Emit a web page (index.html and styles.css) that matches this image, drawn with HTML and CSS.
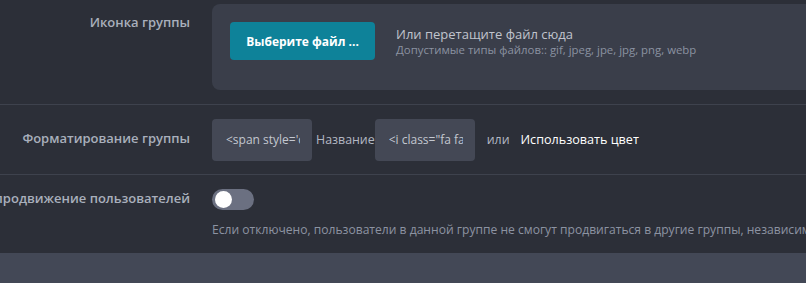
FILE: index.html
```html
<!DOCTYPE html>
<html>
<head>
    <title>Группа</title>
    <link rel="stylesheet" href="styles.css">
</head>
<body>
    <div class="settings">
        <div class="row row-icon">
            <div class="label">Иконка группы</div>
            <div class="field">
                <div class="dropzone">
                    <button type="button" class="pick-btn">Выберите файл ...</button>
                    <div class="drop-text">
                        <div class="drop-main">Или перетащите файл сюда</div>
                        <div class="drop-hint">Допустимые типы файлов:: gif, jpeg, jpe, jpg, png, webp</div>
                    </div>
                </div>
            </div>
        </div>

        <div class="row row-format">
            <div class="label">Форматирование группы</div>
            <div class="field inline">
                <input type="text" class="code-input" value="<span style='color: #fff'>">
                <span class="word">Название</span>
                <input type="text" class="code-input" value='<i class="fa fa-user"></i>'>
                <span class="word or">или</span>
                <span class="use-color">Использовать цвет</span>
            </div>
        </div>

        <div class="row row-promo">
            <div class="label">Разрешить продвижение пользователей</div>
            <div class="field">
                <label class="toggle"><span class="knob"></span></label>
                <div class="help">Если отключено, пользователи в данной группе не смогут продвигаться в другие группы, независимо от настроек.</div>
            </div>
        </div>
    </div>
    <div class="footer-bar"></div>
</body>
</html>
```

FILE: styles.css
```css
html, body {
    margin: 0;
    padding: 0;
    overflow: hidden;
}

body {
    font-family: "Open Sans", Arial, sans-serif;
    background-color: #2c2f38;
    color: #c2c6cf;
    width: 806px;
    height: 283px;
}

.row {
    display: flex;
    border-bottom: 1px solid #3e424d;
}

.label {
    width: 190px;
    flex-shrink: 0;
    display: flex;
    justify-content: flex-end;
    white-space: nowrap;
    font-size: 13px;
    font-weight: 600;
    color: #a9afbc;
    line-height: 18px;
}

.field {
    margin-left: 22px;
    flex: 1;
    min-width: 0;
}

/* icon row */
.row-icon {
    height: 104px;
}

.row-icon .label {
    padding-top: 13px;
}

.row-icon .field {
    padding-top: 4px;
}

.dropzone {
    display: flex;
    align-items: flex-start;
    background-color: #3a3e4a;
    border-radius: 8px 0 0 8px;
    height: 86px;
    box-sizing: border-box;
    padding: 18px;
}

.pick-btn {
    width: 145px;
    height: 38px;
    background-color: #0e8299;
    color: #fff;
    font-family: "Open Sans", Arial, sans-serif;
    font-size: 12px;
    font-weight: 700;
    border: none;
    border-radius: 4px;
    padding: 0;
    flex-shrink: 0;
}

.drop-text {
    margin-left: 21px;
    padding-top: 3px;
    white-space: nowrap;
}

.drop-main {
    font-size: 13px;
    line-height: 18px;
    color: #c0c4cd;
}

.drop-hint {
    font-size: 11.4px;
    line-height: 14px;
    color: #8b92a1;
}

/* format row */
.row-format {
    height: 69px;
    align-items: center;
}

.row-format .label {
    padding-bottom: 3px;
}

.inline {
    display: flex;
    align-items: center;
    white-space: nowrap;
}

.code-input {
    width: 100px;
    height: 42px;
    flex-shrink: 0;
    box-sizing: border-box;
    background-color: #444855;
    border: none;
    border-radius: 4px;
    padding: 0 12px 0 14px;
    font-family: "Open Sans", Arial, sans-serif;
    font-size: 12px;
    color: #c3c7d0;
    outline: none;
}

.word {
    font-size: 12.4px;
    color: #b3b8c3;
    margin: 0 0 0 4px;
}

.word.or {
    margin: 0 11px 0 12px;
}

.use-color {
    font-size: 12.6px;
    color: #fff;
}

/* promotion row */
.row-promo {
    height: 78px;
    border-bottom: none;
}

.row-promo .label {
    padding-top: 14px;
}

.row-promo .field {
    padding-top: 14px;
}

.toggle {
    display: block;
    width: 42px;
    height: 21px;
    border-radius: 11px;
    background-color: #6b7081;
    position: relative;
}

.knob {
    position: absolute;
    left: 3px;
    top: 2px;
    width: 17px;
    height: 17px;
    border-radius: 50%;
    background-color: #fff;
}

.help {
    margin-top: 11px;
    font-size: 12.1px;
    color: #8c93a2;
    white-space: nowrap;
}

.footer-bar {
    height: 30px;
    background-color: #434856;
}
```
